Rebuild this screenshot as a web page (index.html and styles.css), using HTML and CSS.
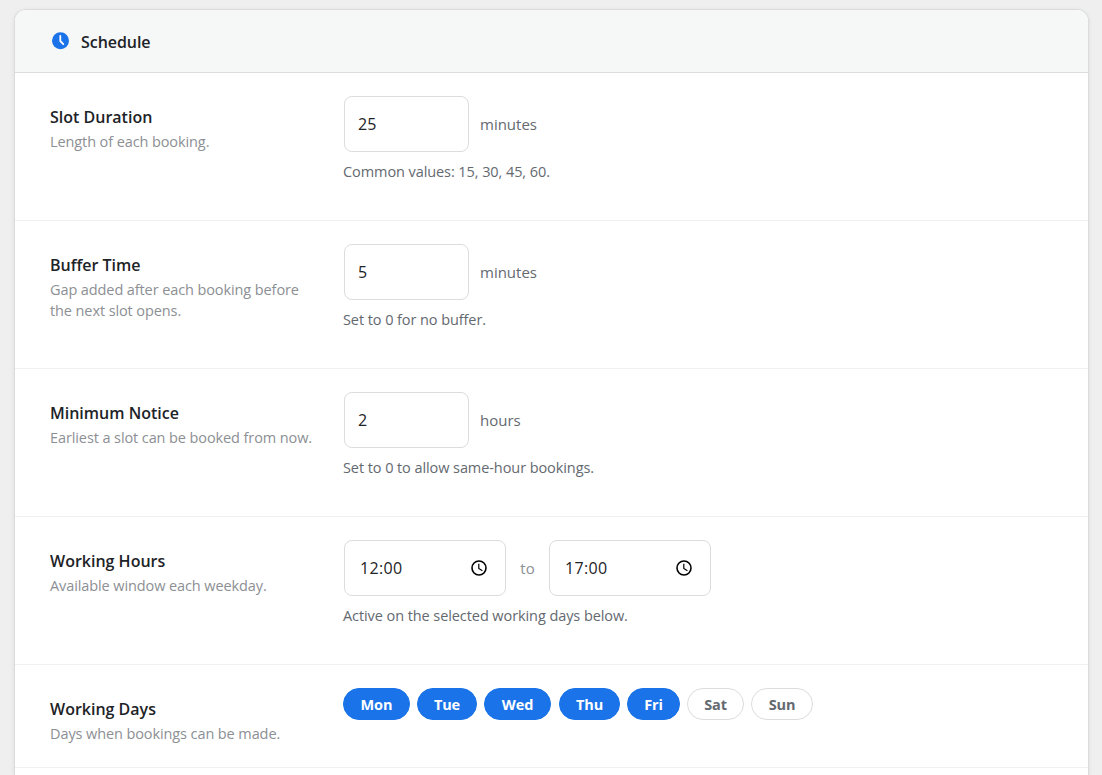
FILE: index.html
```html
<!DOCTYPE html>
<html lang="en">
<head>
  <meta charset="UTF-8">
  <meta name="viewport" content="width=device-width, initial-scale=1.0">
  <title>Schedule</title>
  <link rel="stylesheet" href="styles.css">
</head>
<body>
  <div class="card">
    <div class="card-header">
      <svg class="header-icon" width="18" height="18" viewBox="0 0 18 18">
        <circle cx="9.5" cy="8.8" r="8.5" fill="#1a73e8"/>
        <path d="M9.3 3.9v5.1l3 3.1" fill="none" stroke="#fff" stroke-width="1.8" stroke-linecap="round" stroke-linejoin="round"/>
      </svg>
      <h2>Schedule</h2>
    </div>

    <div class="row">
      <div class="row-label">
        <label for="slot">Slot Duration</label>
        <p>Length of each booking.</p>
      </div>
      <div class="row-field">
        <div class="field-line">
          <input type="number" id="slot" value="25">
          <span class="unit">minutes</span>
        </div>
        <p class="help">Common values: 15, 30, 45, 60.</p>
      </div>
    </div>

    <div class="row">
      <div class="row-label">
        <label for="buffer">Buffer Time</label>
        <p>Gap added after each booking before<br>the next slot opens.</p>
      </div>
      <div class="row-field">
        <div class="field-line">
          <input type="number" id="buffer" value="5">
          <span class="unit">minutes</span>
        </div>
        <p class="help">Set to 0 for no buffer.</p>
      </div>
    </div>

    <div class="row">
      <div class="row-label">
        <label for="notice">Minimum Notice</label>
        <p>Earliest a slot can be booked from now.</p>
      </div>
      <div class="row-field">
        <div class="field-line">
          <input type="number" id="notice" value="2">
          <span class="unit">hours</span>
        </div>
        <p class="help">Set to 0 to allow same-hour bookings.</p>
      </div>
    </div>

    <div class="row">
      <div class="row-label">
        <label for="start">Working Hours</label>
        <p>Available window each weekday.</p>
      </div>
      <div class="row-field">
        <div class="field-line">
          <div class="time-box">
            <input type="text" id="start" value="12:00">
            <svg width="16" height="16" viewBox="0 0 16 16" fill="none" stroke="#000">
              <circle cx="8" cy="8" r="7" stroke-width="1.6"/>
              <path d="M7.8 3.8v4.7l3.6 2.2" stroke-width="1.2"/>
            </svg>
          </div>
          <span class="to">to</span>
          <div class="time-box">
            <input type="text" id="end" value="17:00">
            <svg width="16" height="16" viewBox="0 0 16 16" fill="none" stroke="#000">
              <circle cx="8" cy="8" r="7" stroke-width="1.6"/>
              <path d="M7.8 3.8v4.7l3.6 2.2" stroke-width="1.2"/>
            </svg>
          </div>
        </div>
        <p class="help">Active on the selected working days below.</p>
      </div>
    </div>

    <div class="row row-days">
      <div class="row-label">
        <label>Working Days</label>
        <p>Days when bookings can be made.</p>
      </div>
      <div class="row-field">
        <div class="days">
          <button class="day mon active">Mon</button>
          <button class="day tue active">Tue</button>
          <button class="day wed active">Wed</button>
          <button class="day thu active">Thu</button>
          <button class="day fri active">Fri</button>
          <button class="day sat">Sat</button>
          <button class="day sun">Sun</button>
        </div>
      </div>
    </div>
  </div>
</body>
</html>
```
FILE: styles.css
```css
* {
  box-sizing: border-box;
}
body {
  margin: 0;
  padding: 9px 13px 0 14px;
  background: #efefef;
  color: #1d2327;
  font-family: "Segoe UI", "Open Sans", "Noto Sans", sans-serif;
}
.card {
  height: 766px;
  background: #fff;
  border: 1px solid #dcdcde;
  border-bottom: none;
  border-radius: 12px 12px 0 0;
  box-shadow: 0 1px 4px rgba(0, 0, 0, 0.08);
  overflow: hidden;
}
.card-header {
  display: flex;
  align-items: center;
  gap: 12px;
  height: 63px;
  padding: 0 36px;
  background: #f6f7f7;
  border-bottom: 1px solid #dcdcde;
}
.header-icon {
  margin-bottom: 1px;
}
.card-header h2 {
  margin: 2px 0 0;
  font-size: 16px;
  font-weight: 600;
  letter-spacing: -0.05px;
}
.row {
  display: grid;
  grid-template-columns: 293px 1fr;
  height: 148px;
  padding: 23px 35px 0;
  border-bottom: 1px solid #f0f0f1;
}
.row-days {
  height: 103px;
}
.row-label {
  padding-top: 10px;
}
.row-label label {
  display: block;
  font-size: 16px;
  font-weight: 600;
  line-height: 22px;
}
.row-label p {
  margin: 3px 0 0;
  font-size: 14.5px;
  line-height: 21px;
  color: #8c8f94;
  letter-spacing: -0.1px;
  white-space: nowrap;
}
.field-line {
  display: flex;
  align-items: center;
  padding-left: 1px;
}
input {
  font-family: inherit;
  font-size: 16px;
  color: #1d2327;
  outline: none;
}
input[type="number"] {
  width: 125px;
  height: 56px;
  padding: 0 13px;
  border: 1px solid #dcdcde;
  border-radius: 8px;
}
.unit {
  margin-left: 11px;
  font-size: 15px;
  color: #646970;
}
.help {
  margin: 9px 0 0;
  font-size: 14.5px;
  line-height: 22px;
  color: #646970;
  letter-spacing: -0.08px;
}
.time-box {
  display: flex;
  align-items: center;
  justify-content: space-between;
  width: 162px;
  height: 56px;
  padding: 0 18px 0 15px;
  border: 1px solid #dcdcde;
  border-radius: 8px;
}
.time-box input {
  width: 90px;
  padding: 0;
  border: none;
  background: none;
  letter-spacing: 0.35px;
}
.to {
  width: 43px;
  text-align: center;
  font-size: 15px;
  color: #8c8f94;
}
.days {
  display: flex;
  gap: 7px;
}
.day {
  height: 32px;
  padding: 0;
  border: 1px solid #dcdcde;
  border-radius: 16px;
  background: #fff;
  color: #646970;
  font-family: inherit;
  font-size: 14.5px;
  font-weight: 700;
  letter-spacing: -0.1px;
}
.day.active {
  background: #1a73e8;
  border-color: #1a73e8;
  color: #fff;
}
.mon, .wed {
  width: 67px;
}
.tue {
  width: 60px;
}
.thu {
  width: 61px;
  margin-left: 1px;
}
.fri {
  width: 53px;
}
.sat {
  width: 57px;
}
.sun {
  width: 62px;
}
```
